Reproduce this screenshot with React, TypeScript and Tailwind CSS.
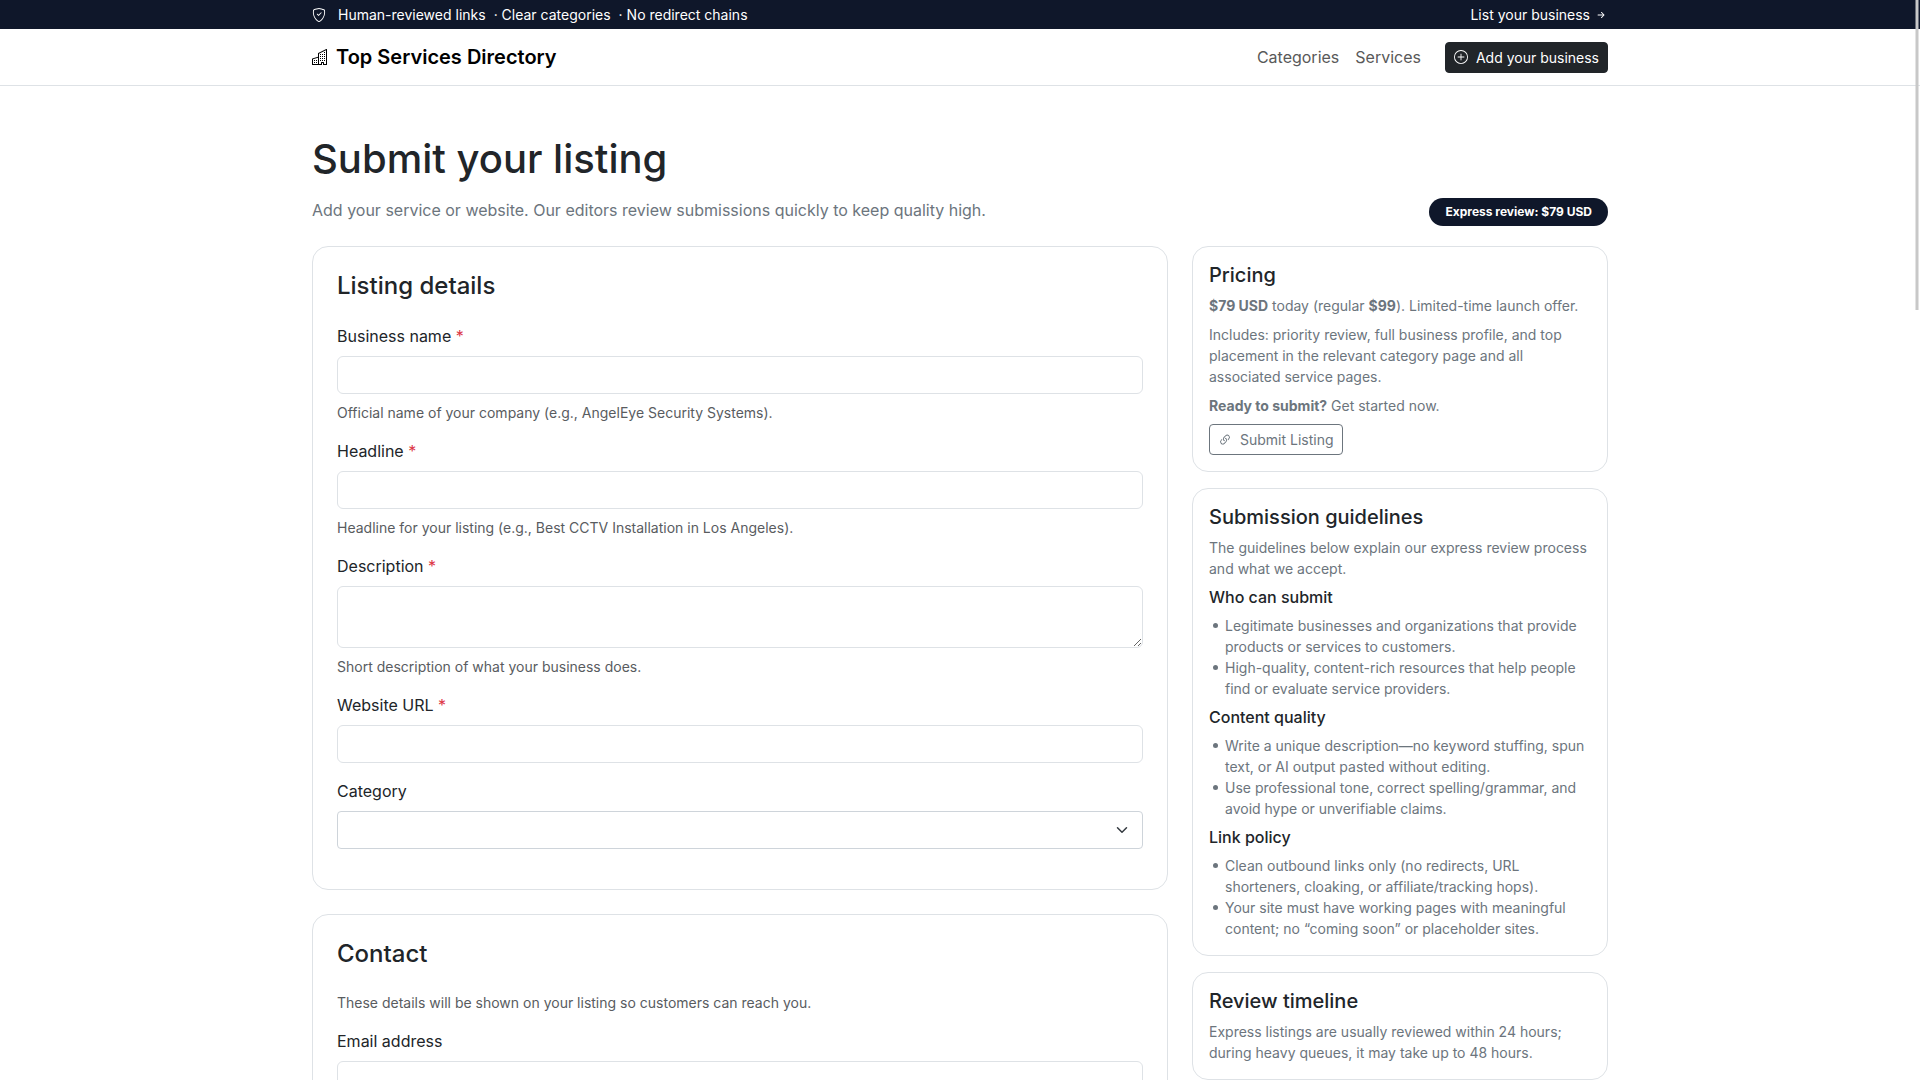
import { useState } from "react";
import type { ReactNode } from "react";
import {
  BsArrowRightShort,
  BsBuildings,
  BsLink45Deg,
  BsPlusCircle,
  BsShieldCheck,
} from "react-icons/bs";

type FieldProps = {
  id: string;
  label: string;
  required?: boolean;
  help?: string;
  children: ReactNode;
};

const inputClass =
  "block w-full rounded-md border border-[#dee2e6] bg-white px-3 py-1.5 text-base leading-6 outline-none focus:border-blue-300 focus:ring-4 focus:ring-blue-200";

const guidelines = [
  {
    title: "Who can submit",
    items: [
      "Legitimate businesses and organizations that provide products or services to customers.",
      "High-quality, content-rich resources that help people find or evaluate service providers.",
    ],
  },
  {
    title: "Content quality",
    items: [
      "Write a unique description—no keyword stuffing, spun text, or AI output pasted without editing.",
      "Use professional tone, correct spelling/grammar, and avoid hype or unverifiable claims.",
    ],
  },
  {
    title: "Link policy",
    items: [
      "Clean outbound links only (no redirects, URL shorteners, cloaking, or affiliate/tracking hops).",
      "Your site must have working pages with meaningful content; no “coming soon” or placeholder sites.",
    ],
  },
];

function Field({ id, label, required, help, children }: FieldProps) {
  return (
    <div className="mb-4">
      <label htmlFor={id} className="mb-2 block">
        {label} {required && <span className="text-[#dc3545]">*</span>}
      </label>
      {children}
      {help && (
        <p className="mt-2 text-sm leading-[21px] text-[#595c5f]">{help}</p>
      )}
    </div>
  );
}

function FormCard({ title, children }: { title: string; children: ReactNode }) {
  return (
    <section className="rounded-2xl border border-[#dee2e6] bg-white p-6">
      <h2 className="mb-6 text-2xl leading-[29px] font-medium">{title}</h2>
      {children}
    </section>
  );
}

function SideCard({ title, children }: { title: string; children: ReactNode }) {
  return (
    <section className="rounded-2xl border border-[#dee2e6] bg-white p-4 text-sm leading-[21px] text-[#6c757d]">
      <h2 className="mb-2 text-xl leading-6 font-medium text-[#212529]">
        {title}
      </h2>
      {children}
    </section>
  );
}

export default function App() {
  const [form, setForm] = useState({
    name: "",
    headline: "",
    description: "",
    url: "",
    category: "",
    email: "",
  });

  const handleChange = (
    e: React.ChangeEvent<
      HTMLInputElement | HTMLTextAreaElement | HTMLSelectElement
    >
  ) => {
    setForm({ ...form, [e.target.name]: e.target.value });
  };

  return (
    <div className="relative h-screen overflow-hidden bg-white font-[Inter,sans-serif] text-base leading-6 text-[#212529]">
      {/* Announcement bar */}
      <div className="bg-[#0f172a] py-1 text-sm leading-[21px] text-white">
        <div className="mx-auto flex max-w-[1320px] items-center justify-between px-3">
          <div className="flex items-center gap-2">
            <BsShieldCheck className="mr-1 size-3.5" />
            <span>Human-reviewed links</span>
            <span>· Clear categories</span>
            <span>· No redirect chains</span>
          </div>
          <a href="#submit" className="flex items-center gap-1">
            List your business
            <BsArrowRightShort className="size-3.5" />
          </a>
        </div>
      </div>

      {/* Navbar */}
      <header className="border-b border-[#dee2e6] bg-white">
        <div className="mx-auto flex h-14 max-w-[1320px] items-center justify-between px-3">
          <a
            href="#home"
            className="flex items-center gap-2 text-xl font-semibold text-black"
          >
            <BsBuildings className="size-4" />
            Top Services Directory
          </a>
          <nav className="flex items-center gap-4 text-[#595959]">
            <a href="#categories">Categories</a>
            <a href="#services">Services</a>
            <a
              href="#submit"
              className="ml-2 flex items-center gap-2 rounded border border-[#212529] bg-[#212529] px-2 py-1 text-sm leading-[21px] text-white"
            >
              <BsPlusCircle className="size-3.5" />
              Add your business
            </a>
          </nav>
        </div>
      </header>

      <main className="mx-auto max-w-[1320px] px-3 py-12">
        <h1 className="mb-[14px] text-[40px] leading-[50px] font-medium">
          Submit your listing
        </h1>
        <div className="mb-5 flex items-start justify-between">
          <p className="text-[#6c757d]">
            Add your service or website. Our editors review submissions quickly
            to keep quality high.
          </p>
          <span className="rounded-full bg-[#0f172a] px-4 py-2 text-xs leading-3 font-bold text-white">
            Express review: $79 USD
          </span>
        </div>

        <div className="grid grid-cols-12 items-start gap-6">
          {/* Form */}
          <form
            id="submit"
            className="col-span-8 flex flex-col gap-6"
            onSubmit={(e) => e.preventDefault()}
          >
            <FormCard title="Listing details">
              <Field
                id="name"
                label="Business name"
                required
                help="Official name of your company (e.g., AngelEye Security Systems)."
              >
                <input
                  id="name"
                  name="name"
                  type="text"
                  value={form.name}
                  onChange={handleChange}
                  className={inputClass}
                />
              </Field>
              <Field
                id="headline"
                label="Headline"
                required
                help="Headline for your listing (e.g., Best CCTV Installation in Los Angeles)."
              >
                <input
                  id="headline"
                  name="headline"
                  type="text"
                  value={form.headline}
                  onChange={handleChange}
                  className={inputClass}
                />
              </Field>
              <Field
                id="description"
                label="Description"
                required
                help="Short description of what your business does."
              >
                <textarea
                  id="description"
                  name="description"
                  rows={2}
                  value={form.description}
                  onChange={handleChange}
                  className={inputClass}
                />
              </Field>
              <Field id="url" label="Website URL" required>
                <input
                  id="url"
                  name="url"
                  type="url"
                  value={form.url}
                  onChange={handleChange}
                  className={inputClass}
                />
              </Field>
              <Field id="category" label="Category">
                <div className="relative">
                  <select
                    id="category"
                    name="category"
                    value={form.category}
                    onChange={handleChange}
                    className="block h-[38px] w-full appearance-none rounded border border-[#ced4da] bg-white py-1.5 pr-9 pl-3"
                  >
                    <option value=""></option>
                  </select>
                  <svg
                    viewBox="0 0 16 16"
                    className="pointer-events-none absolute top-[13px] right-[13px] h-3 w-4"
                    fill="none"
                    stroke="#343a40"
                    strokeWidth="2"
                    strokeLinecap="round"
                    strokeLinejoin="round"
                  >
                    <path d="m2 5 6 6 6-6" />
                  </svg>
                </div>
              </Field>
            </FormCard>

            <FormCard title="Contact">
              <p className="mb-4 text-sm leading-[21px] text-[#595c5f]">
                These details will be shown on your listing so customers can
                reach you.
              </p>
              <Field id="email" label="Email address">
                <input
                  id="email"
                  name="email"
                  type="email"
                  value={form.email}
                  onChange={handleChange}
                  className={inputClass}
                />
              </Field>
            </FormCard>
          </form>

          {/* Sidebar */}
          <aside className="col-span-4 flex flex-col gap-4">
            <SideCard title="Pricing">
              <p className="mb-2">
                <strong>$79 USD</strong> today (regular <strong>$99</strong>).
                Limited-time launch offer.
              </p>
              <p className="mb-2">
                Includes: priority review, full business profile, and top
                placement in the relevant category page and all associated
                service pages.
              </p>
              <p className="mb-2">
                <strong>Ready to submit?</strong> Get started now.
              </p>
              <a
                href="#submit"
                className="flex w-fit items-center gap-2 rounded border border-[#6c757d] px-2 py-1"
              >
                <BsLink45Deg className="size-3.5" />
                Submit Listing
              </a>
            </SideCard>

            <SideCard title="Submission guidelines">
              <p>
                The guidelines below explain our express review process and what
                we accept.
              </p>
              {guidelines.map((group) => (
                <div key={group.title} className="mt-2">
                  <h3 className="mb-2 text-base leading-5 font-medium text-[#212529]">
                    {group.title}
                  </h3>
                  <ul className="pl-4">
                    {group.items.map((item) => (
                      <li
                        key={item}
                        className="relative before:absolute before:top-2 before:-left-3 before:size-[5px] before:rounded-full before:bg-current"
                      >
                        {item}
                      </li>
                    ))}
                  </ul>
                </div>
              ))}
            </SideCard>

            <SideCard title="Review timeline">
              <p>
                Express listings are usually reviewed within 24 hours; during
                heavy queues, it may take up to 48 hours.
              </p>
            </SideCard>
          </aside>
        </div>
      </main>

      {/* Scroll thumb */}
      <div
        aria-hidden="true"
        className="absolute top-0 right-px h-[310px] w-1 border-x border-[#c8c8c8]/50 bg-[#c8c8c8] bg-clip-padding"
      />
    </div>
  );
}
